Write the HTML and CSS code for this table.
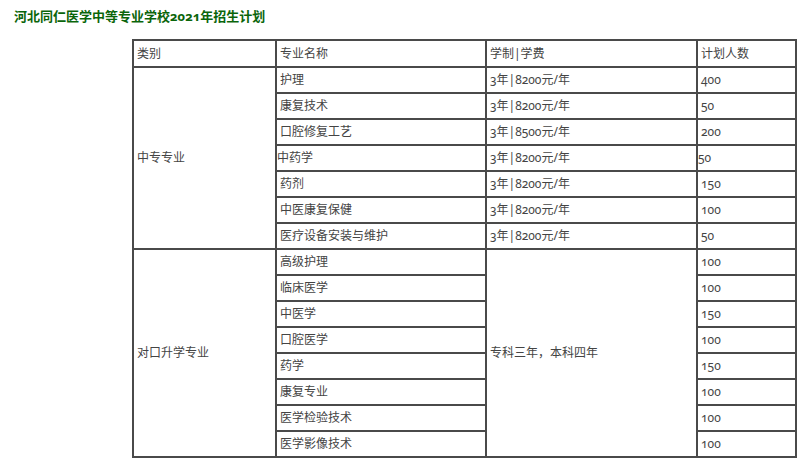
FILE: index.html
```html
<!DOCTYPE html>
<html lang="zh-CN">
<head>
<meta charset="utf-8">
<title>河北同仁医学中等专业学校2021年招生计划</title>
<link rel="stylesheet" href="styles.css">
</head>
<body>
<h1 class="title">河北同仁医学中等专业学校2021年招生计划</h1>
<table class="plan">
  <tr class="head">
    <td class="c1">类别</td>
    <td class="c2">专业名称</td>
    <td class="c3">学制|学费</td>
    <td class="c4">计划人数</td>
  </tr>
  <tr>
    <td rowspan="7">中专专业</td>
    <td>护理</td><td>3年|8200元/年</td><td>400</td>
  </tr>
  <tr><td>康复技术</td><td>3年|8200元/年</td><td>50</td></tr>
  <tr><td>口腔修复工艺</td><td>3年|8500元/年</td><td>200</td></tr>
  <tr><td class="tight">中药学</td><td>3年|8200元/年</td><td class="tight">50</td></tr>
  <tr><td>药剂</td><td>3年|8200元/年</td><td>150</td></tr>
  <tr><td>中医康复保健</td><td>3年|8200元/年</td><td>100</td></tr>
  <tr><td>医疗设备安装与维护</td><td>3年|8200元/年</td><td>50</td></tr>
  <tr>
    <td rowspan="8">对口升学专业</td>
    <td>高级护理</td>
    <td rowspan="8">专科三年，本科四年</td>
    <td>100</td>
  </tr>
  <tr><td>临床医学</td><td>100</td></tr>
  <tr><td>中医学</td><td>150</td></tr>
  <tr><td>口腔医学</td><td>100</td></tr>
  <tr><td>药学</td><td>150</td></tr>
  <tr><td>康复专业</td><td>100</td></tr>
  <tr><td>医学检验技术</td><td>100</td></tr>
  <tr><td>医学影像技术</td><td>100</td></tr>
</table>
</body>
</html>
```
FILE: styles.css
```css
html, body {
  margin: 0;
  background: #ffffff;
}

body {
  padding: 8px 0 0 14px;
  font-family: "Noto Sans", "Noto Sans CJK SC", sans-serif;
  font-variant-numeric: oldstyle-nums;
}

.title {
  margin: 0;
  font-size: 13px;
  line-height: 16px;
  font-weight: bold;
  color: #0a650a;
}

.plan {
  margin: 15px 0 0 118px;
  border-collapse: separate;
  border-spacing: 0;
  border: 1px solid #4a4a4a;
  table-layout: fixed;
  width: 665px;
}

.plan td {
  box-sizing: border-box;
  border: 1px solid #4a4a4a;
  padding: 0 3px;
  height: 26px;
  font-size: 12px;
  line-height: 16px;
  color: #444444;
  vertical-align: middle;
  text-align: left;
  white-space: nowrap;
}

.plan .head td {
  height: 27px;
}

.plan .c1 { width: 143px; }
.plan .c2 { width: 210px; }
.plan .c3 { width: 211px; }
.plan .c4 { width: 99px; }

.plan td.tight {
  padding-left: 0;
}
```
